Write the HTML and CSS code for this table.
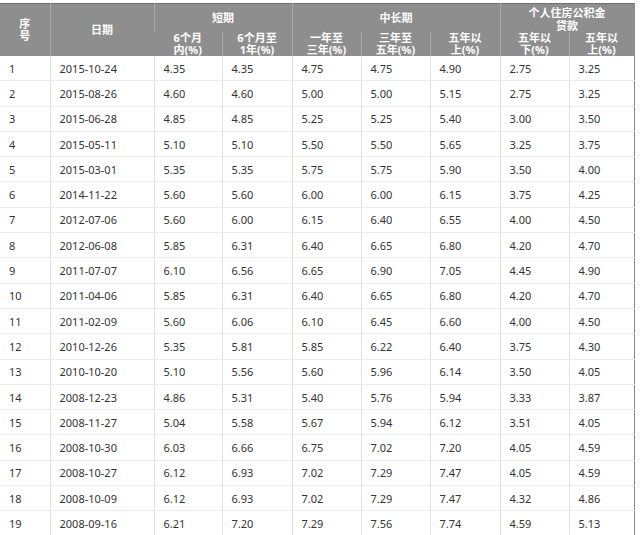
FILE: index.html
```html
<!DOCTYPE html>
<html lang="zh">
<head>
<meta charset="utf-8">
<link rel="stylesheet" href="styles.css">
</head>
<body>
<table class="rates">
  <colgroup>
    <col class="c-no"><col class="c-date"><col class="c-a"><col class="c-b"><col class="c-c"><col class="c-d"><col class="c-e"><col class="c-f"><col class="c-g">
  </colgroup>
  <thead>
    <tr class="h1">
      <th rowspan="2" class="narrow">序<br>号</th>
      <th rowspan="2">日期</th>
      <th colspan="2">短期</th>
      <th colspan="3">中长期</th>
      <th colspan="2" class="two">个人住房公积金<br>贷款</th>
    </tr>
    <tr class="h2">
      <th>6个月<br>内(%)</th>
      <th>6个月至<br>1年(%)</th>
      <th>一年至<br>三年(%)</th>
      <th>三年至<br>五年(%)</th>
      <th>五年以<br>上(%)</th>
      <th>五年以<br>下(%)</th>
      <th>五年以<br>上(%)</th>
    </tr>
  </thead>
  <tbody>
    <tr><td>1</td><td>2015-10-24</td><td>4.35</td><td>4.35</td><td>4.75</td><td>4.75</td><td>4.90</td><td>2.75</td><td>3.25</td></tr>
    <tr><td>2</td><td>2015-08-26</td><td>4.60</td><td>4.60</td><td>5.00</td><td>5.00</td><td>5.15</td><td>2.75</td><td>3.25</td></tr>
    <tr><td>3</td><td>2015-06-28</td><td>4.85</td><td>4.85</td><td>5.25</td><td>5.25</td><td>5.40</td><td>3.00</td><td>3.50</td></tr>
    <tr><td>4</td><td>2015-05-11</td><td>5.10</td><td>5.10</td><td>5.50</td><td>5.50</td><td>5.65</td><td>3.25</td><td>3.75</td></tr>
    <tr><td>5</td><td>2015-03-01</td><td>5.35</td><td>5.35</td><td>5.75</td><td>5.75</td><td>5.90</td><td>3.50</td><td>4.00</td></tr>
    <tr><td>6</td><td>2014-11-22</td><td>5.60</td><td>5.60</td><td>6.00</td><td>6.00</td><td>6.15</td><td>3.75</td><td>4.25</td></tr>
    <tr><td>7</td><td>2012-07-06</td><td>5.60</td><td>6.00</td><td>6.15</td><td>6.40</td><td>6.55</td><td>4.00</td><td>4.50</td></tr>
    <tr><td>8</td><td>2012-06-08</td><td>5.85</td><td>6.31</td><td>6.40</td><td>6.65</td><td>6.80</td><td>4.20</td><td>4.70</td></tr>
    <tr><td>9</td><td>2011-07-07</td><td>6.10</td><td>6.56</td><td>6.65</td><td>6.90</td><td>7.05</td><td>4.45</td><td>4.90</td></tr>
    <tr><td>10</td><td>2011-04-06</td><td>5.85</td><td>6.31</td><td>6.40</td><td>6.65</td><td>6.80</td><td>4.20</td><td>4.70</td></tr>
    <tr><td>11</td><td>2011-02-09</td><td>5.60</td><td>6.06</td><td>6.10</td><td>6.45</td><td>6.60</td><td>4.00</td><td>4.50</td></tr>
    <tr><td>12</td><td>2010-12-26</td><td>5.35</td><td>5.81</td><td>5.85</td><td>6.22</td><td>6.40</td><td>3.75</td><td>4.30</td></tr>
    <tr><td>13</td><td>2010-10-20</td><td>5.10</td><td>5.56</td><td>5.60</td><td>5.96</td><td>6.14</td><td>3.50</td><td>4.05</td></tr>
    <tr><td>14</td><td>2008-12-23</td><td>4.86</td><td>5.31</td><td>5.40</td><td>5.76</td><td>5.94</td><td>3.33</td><td>3.87</td></tr>
    <tr><td>15</td><td>2008-11-27</td><td>5.04</td><td>5.58</td><td>5.67</td><td>5.94</td><td>6.12</td><td>3.51</td><td>4.05</td></tr>
    <tr><td>16</td><td>2008-10-30</td><td>6.03</td><td>6.66</td><td>6.75</td><td>7.02</td><td>7.20</td><td>4.05</td><td>4.59</td></tr>
    <tr><td>17</td><td>2008-10-27</td><td>6.12</td><td>6.93</td><td>7.02</td><td>7.29</td><td>7.47</td><td>4.05</td><td>4.59</td></tr>
    <tr><td>18</td><td>2008-10-09</td><td>6.12</td><td>6.93</td><td>7.02</td><td>7.29</td><td>7.47</td><td>4.32</td><td>4.86</td></tr>
    <tr><td>19</td><td>2008-09-16</td><td>6.21</td><td>7.20</td><td>7.29</td><td>7.56</td><td>7.74</td><td>4.59</td><td>5.13</td></tr>
  </tbody>
</table>
</body>
</html>
```
FILE: styles.css
```css
html, body {
  margin: 0;
  padding: 0;
  background: #ffffff;
}
body {
  padding-top: 3px;
  font-family: "Noto Sans", "Noto Sans CJK SC", sans-serif;
}
.rates {
  width: 634px;
  border-collapse: collapse;
  table-layout: fixed;
  border-top: 1px solid #6f6f6f;
  border-right: 1px solid #8a8a8a;
}
.c-no { width: 50px; }
.c-date { width: 104px; }
.c-a { width: 68px; }
.c-b { width: 70px; }
.c-c { width: 69px; }
.c-d { width: 69px; }
.c-e { width: 70px; }
.c-f { width: 69px; }
.c-g { width: 65px; }

.rates th {
  background: #8e8e8e;
  color: #ffffff;
  font-weight: bold;
  font-size: 11px;
  line-height: 12px;
  text-align: center;
  vertical-align: middle;
  padding: 0;
  border-left: 1px solid #a9a9a9;
}
.rates th:first-child { border-left: none; }
.h1 th { height: 26px; }
.h2 th { height: 24px; }
.h1 th.two { height: 24px; line-height: 13px; padding-top: 2px; vertical-align: top; }

.rates td {
  height: 24.3px;
  padding: 0 0 0 9px;
  font-size: 11px;
  color: #333333;
  border-left: 1px solid #e0e0e2;
  border-bottom: 1px solid #ececee;
  white-space: nowrap;
  vertical-align: middle;
}
.rates td:first-child { border-left: none; }
```
